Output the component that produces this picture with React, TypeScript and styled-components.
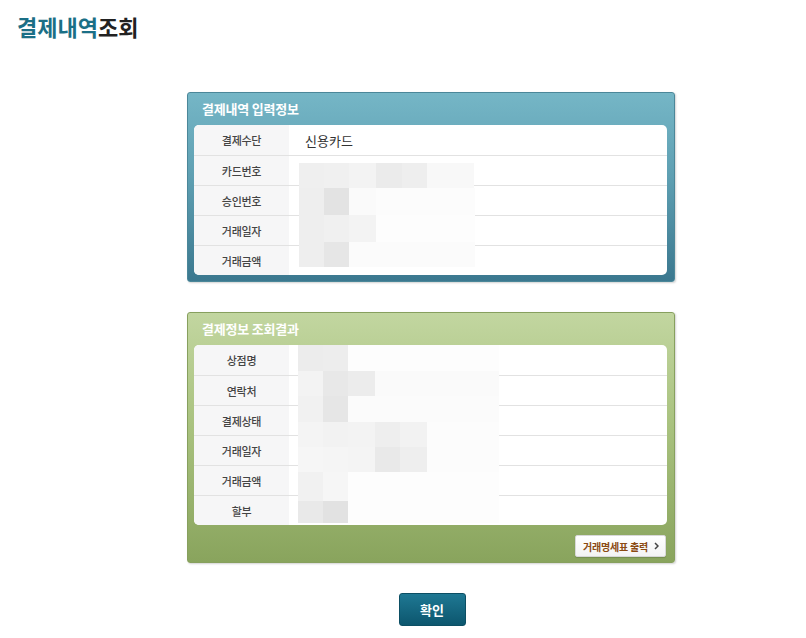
import React from "react";
import styled, { createGlobalStyle } from "styled-components";

const Global = createGlobalStyle`
  html, body { margin: 0; padding: 0; background: #ffffff; }
  body { font-family: "Noto Sans CJK KR", "Noto Sans", sans-serif; }
  * { box-sizing: border-box; }
`;

const Page = styled.div`
  width: 806px;
  height: 638px;
  position: relative;
`;

const Title = styled.h1`
  margin: 0;
  padding: 10px 0 0 17px;
  height: 92px;
  font-size: 22px;
  font-weight: 700;
  letter-spacing: 0;
  color: #222;
  line-height: 32px;
`;

const Accent = styled.span`
  color: #1b6f86;
`;

const Column = styled.div`
  margin-left: 187px;
  width: 488px;
  display: flex;
  flex-direction: column;
  align-items: stretch;
  gap: 30px;
`;

type Tone = "blue" | "green";

const Panel = styled.section<{ $tone: Tone }>`
  position: relative;
  border: 1px solid ${(p) => (p.$tone === "blue" ? "#4b8799" : "#87a05e")};
  border-radius: 3px;
  background: ${(p) =>
    p.$tone === "blue"
      ? "linear-gradient(#75b6c6, #5e9fb2 45%, #3b788f)"
      : "linear-gradient(#c2d6a0, #a9c27f 45%, #89a45d)"};
  box-shadow: 1px 1px 2px rgba(0, 0, 0, 0.18);
  padding: 0 7px 6px 6px;
`;

const PanelHead = styled.h2`
  margin: 0;
  height: 32px;
  padding-left: 8px;
  font-size: 13px;
  font-weight: 700;
  color: #ffffff;
  line-height: 32px;
  letter-spacing: -0.2px;
`;

const Sheet = styled.div`
  position: relative;
  background: #ffffff;
  border-radius: 5px;
  overflow: hidden;
`;

const Row = styled.div`
  display: flex;
  height: 30px;
  border-top: 1px solid #e2e2e2;
  &:first-child { border-top: none; }
`;

const Label = styled.div`
  width: 95px;
  flex: none;
  background: #f6f6f7;
  color: #444;
  font-size: 11px;
  font-weight: 500;
  display: flex;
  align-items: center;
  justify-content: center;
  letter-spacing: -0.3px;
`;

const Value = styled.div`
  flex: 1;
  padding-left: 16px;
  font-size: 13px;
  color: #333;
  display: flex;
  align-items: center;
`;

const Mosaic = styled.div<{ $left: number; $top: number }>`
  position: absolute;
  left: ${(p) => p.$left}px;
  top: ${(p) => p.$top}px;
  display: flex;
  flex-direction: column;
`;

const MosaicRow = styled.div<{ $h: number }>`
  display: flex;
  height: ${(p) => p.$h}px;
`;

const Cell = styled.div<{ $w: number; $c: string }>`
  width: ${(p) => p.$w}px;
  height: 100%;
  background: ${(p) => p.$c};
`;

const Footer = styled.div`
  display: flex;
  justify-content: flex-end;
  padding: 10px 1px 0 0;
  height: 31px;
`;

const PrintButton = styled.button`
  height: 22px;
  padding: 0 6px 0 7px;
  background: linear-gradient(#ffffff, #f3f3f3);
  border: 1px solid #d8d8d8;
  border-radius: 2px;
  box-shadow: 0 1px 1px rgba(0, 0, 0, 0.15);
  color: #8b4a12;
  font-family: "Noto Sans CJK KR", sans-serif;
  font-size: 10px;
  font-weight: 700;
  letter-spacing: -0.2px;
  display: flex;
  align-items: center;
  gap: 6px;
  cursor: pointer;
`;

const Actions = styled.div`
  display: flex;
  justify-content: center;
`;

const Confirm = styled.button`
  width: 67px;
  height: 33px;
  margin-left: 2px;
  border: 1px solid #0c4f64;
  border-radius: 3px;
  background: linear-gradient(#1f7893, #0c566e);
  color: #fff;
  font-family: "Noto Sans CJK KR", sans-serif;
  font-size: 13px;
  font-weight: 700;
  cursor: pointer;
`;

type MosaicSpec = { h: number; cells: [number, string][] }[];

const mosaic1: MosaicSpec = [
  { h: 25, cells: [[25, "#efefef"], [25, "#f0f0f0"], [27, "#f3f3f3"], [26, "#ebebeb"], [25, "#eeeeee"], [47, "#f8f8f8"]] },
  { h: 27, cells: [[25, "#eeeeee"], [25, "#e3e3e3"], [27, "#fafafa"], [99, "#fcfcfc"]] },
  { h: 27, cells: [[25, "#eeeeee"], [25, "#f0f0f0"], [27, "#f3f3f3"], [99, "#fdfdfd"]] },
  { h: 25, cells: [[25, "#eeeeee"], [25, "#e6e6e6"], [126, "#fbfbfb"]] },
];

const mosaic2: MosaicSpec = [
  { h: 26, cells: [[25, "#ececec"], [25, "#ededed"], [151, "#fdfdfd"]] },
  { h: 25, cells: [[25, "#f3f3f3"], [25, "#e8e8e8"], [27, "#ececec"], [124, "#fafafa"]] },
  { h: 26, cells: [[25, "#f1f1f1"], [25, "#e6e6e6"], [151, "#fbfbfb"]] },
  { h: 25, cells: [[25, "#f4f4f4"], [25, "#f2f2f2"], [27, "#f3f3f3"], [25, "#eeeeee"], [27, "#f2f2f2"], [72, "#fcfcfc"]] },
  { h: 25, cells: [[25, "#f6f6f6"], [25, "#f5f5f5"], [27, "#f4f4f4"], [25, "#e9e9e9"], [27, "#eeeeee"], [72, "#fcfcfc"]] },
  { h: 29, cells: [[25, "#f1f1f1"], [25, "#f6f6f6"], [151, "#fdfdfd"]] },
  { h: 22, cells: [[25, "#e9e9e9"], [25, "#e2e2e2"], [151, "#fdfdfd"]] },
];

const MosaicBlock = ({ spec, left, top }: { spec: MosaicSpec; left: number; top: number }) => (
  <Mosaic $left={left} $top={top} aria-hidden>
    {spec.map((r, i) => (
      <MosaicRow key={i} $h={r.h}>
        {r.cells.map(([w, c], j) => (
          <Cell key={j} $w={w} $c={c} />
        ))}
      </MosaicRow>
    ))}
  </Mosaic>
);

const ChevronIcon = () => (
  <svg width="5" height="8" viewBox="0 0 5 8" aria-hidden>
    <path d="M1 1 L4 4 L1 7" fill="none" stroke="#444" strokeWidth="1.5" />
  </svg>
);

const inputRows: [string, string][] = [
  ["결제수단", "신용카드"],
  ["카드번호", ""],
  ["승인번호", ""],
  ["거래일자", ""],
  ["거래금액", ""],
];

const resultRows = ["상점명", "연락처", "결제상태", "거래일자", "거래금액", "할부"];

export default function App() {
  return (
    <Page>
      <Global />
      <Title>
        <Accent>결제내역</Accent>조회
      </Title>
      <Column>
        <Panel $tone="blue">
          <PanelHead>결제내역 입력정보</PanelHead>
          <Sheet>
            {inputRows.map(([l, v]) => (
              <Row key={l}>
                <Label>{l}</Label>
                <Value>{v}</Value>
              </Row>
            ))}
            <MosaicBlock spec={mosaic1} left={105} top={38} />
          </Sheet>
        </Panel>

        <Panel $tone="green">
          <PanelHead>결제정보 조회결과</PanelHead>
          <Sheet>
            {resultRows.map((l) => (
              <Row key={l}>
                <Label>{l}</Label>
                <Value />
              </Row>
            ))}
            <MosaicBlock spec={mosaic2} left={104} top={0} />
          </Sheet>
          <Footer>
            <PrintButton>
              거래명세표 출력 <ChevronIcon />
            </PrintButton>
          </Footer>
        </Panel>

        <Actions>
          <Confirm>확인</Confirm>
        </Actions>
      </Column>
    </Page>
  );
}
